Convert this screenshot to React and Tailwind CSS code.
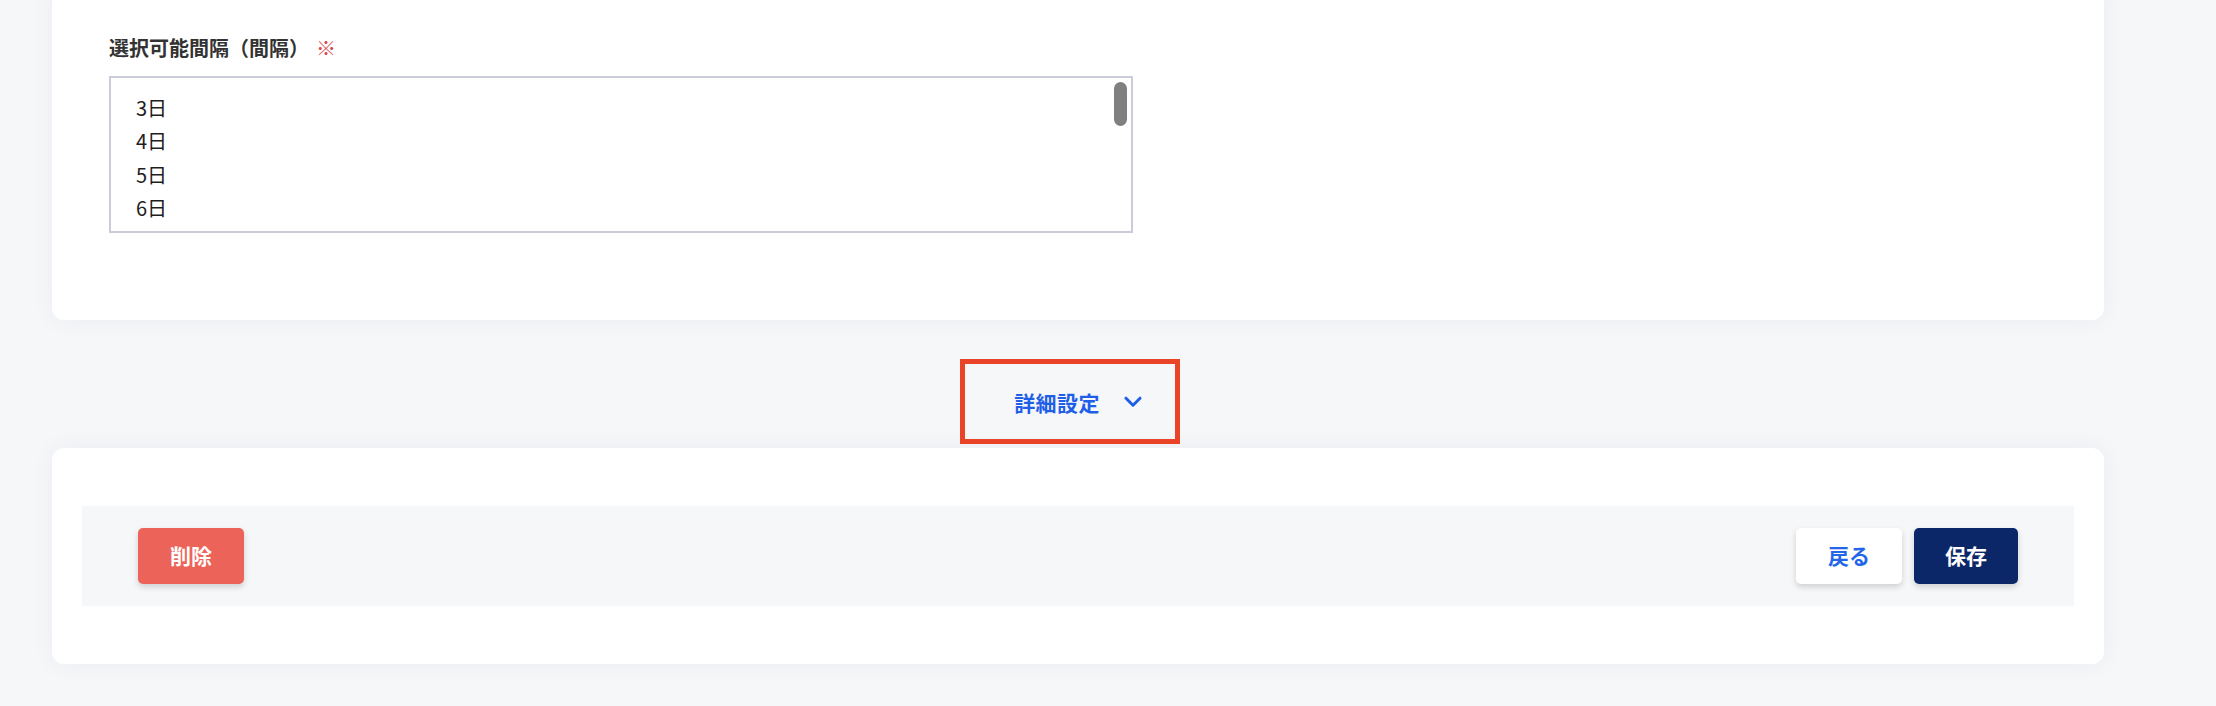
import React from 'react';

const options = ['3日', '4日', '5日', '6日', '7日', '8日', '9日', '10日', '11日', '12日', '13日', '14日', '15日', '16日'];

const App = () => {
  return (
    <div className="h-screen overflow-hidden bg-[#f6f7f9] font-['Noto_Sans_CJK_JP','Noto_Sans',sans-serif]">
      <div className="ml-[52px] w-[2052px]">
        {/* Interval settings card */}
        <section className="-mt-[20px] rounded-[12px] bg-white pt-[53px] pb-[87px] pl-[57px] shadow-[0_0_24px_rgba(30,40,70,0.05)]">
          <label className="mb-[13px] flex items-center text-[20px] font-bold leading-[30px] text-[#333333]">
            選択可能間隔（間隔）
            <span className="ml-[7px] font-normal text-[#d9474a]">※</span>
          </label>
          <div className="relative h-[157px] w-[1024px] overflow-hidden border-2 border-[#caccd9] bg-white">
            <ul className="pt-[13px] pl-[25px]">
              {options.map((o) => (
                <li key={o} className="h-[33.3px] text-[20px] leading-[33px] text-[#1e1e1e]">
                  {o}
                </li>
              ))}
            </ul>
            <div className="absolute right-[4px] top-[4px] h-[44px] w-[13px] rounded-full bg-[#808080]" />
          </div>
        </section>

        {/* Advanced settings toggle */}
        <div className="relative flex h-[128px] items-start justify-center pt-[66px]">
          <button className="flex h-[32px] items-center gap-[24px] text-[21px] font-bold leading-[32px] text-[#1f5fe8]">
            <span className="tracking-[0.02em]">詳細設定</span>
            <svg width="18" height="12" viewBox="0 0 18 12" fill="none">
              <path d="M2 2.2 L9 9.2 L16 2.2" stroke="#1f5fe8" strokeWidth="3" strokeLinecap="round" strokeLinejoin="round" />
            </svg>
          </button>
          <div className="pointer-events-none absolute left-[908px] top-[39px] h-[85px] w-[220px] border-[5px] border-[#ea4428]" />
        </div>

        {/* Action card */}
        <section className="rounded-[12px] bg-white px-[30px] py-[58px] shadow-[0_0_24px_rgba(30,40,70,0.05)]">
          <div className="flex h-[100px] items-center justify-between bg-[#f6f7f9] px-[56px]">
            <button className="h-[56px] w-[106px] rounded-[5px] bg-[#ec6459] text-[21px] font-bold text-white shadow-[0_3px_6px_rgba(0,0,0,0.16)]">
              削除
            </button>
            <div className="flex gap-[12px]">
              <button className="h-[56px] w-[106px] rounded-[5px] bg-white text-[21px] font-bold text-[#2366e8] shadow-[0_3px_6px_rgba(0,0,0,0.16)]">
                戻る
              </button>
              <button className="h-[56px] w-[104px] rounded-[5px] bg-[#0c2768] text-[21px] font-bold text-white shadow-[0_3px_6px_rgba(0,0,0,0.16)]">
                保存
              </button>
            </div>
          </div>
        </section>
      </div>
    </div>
  );
};

export default App;
